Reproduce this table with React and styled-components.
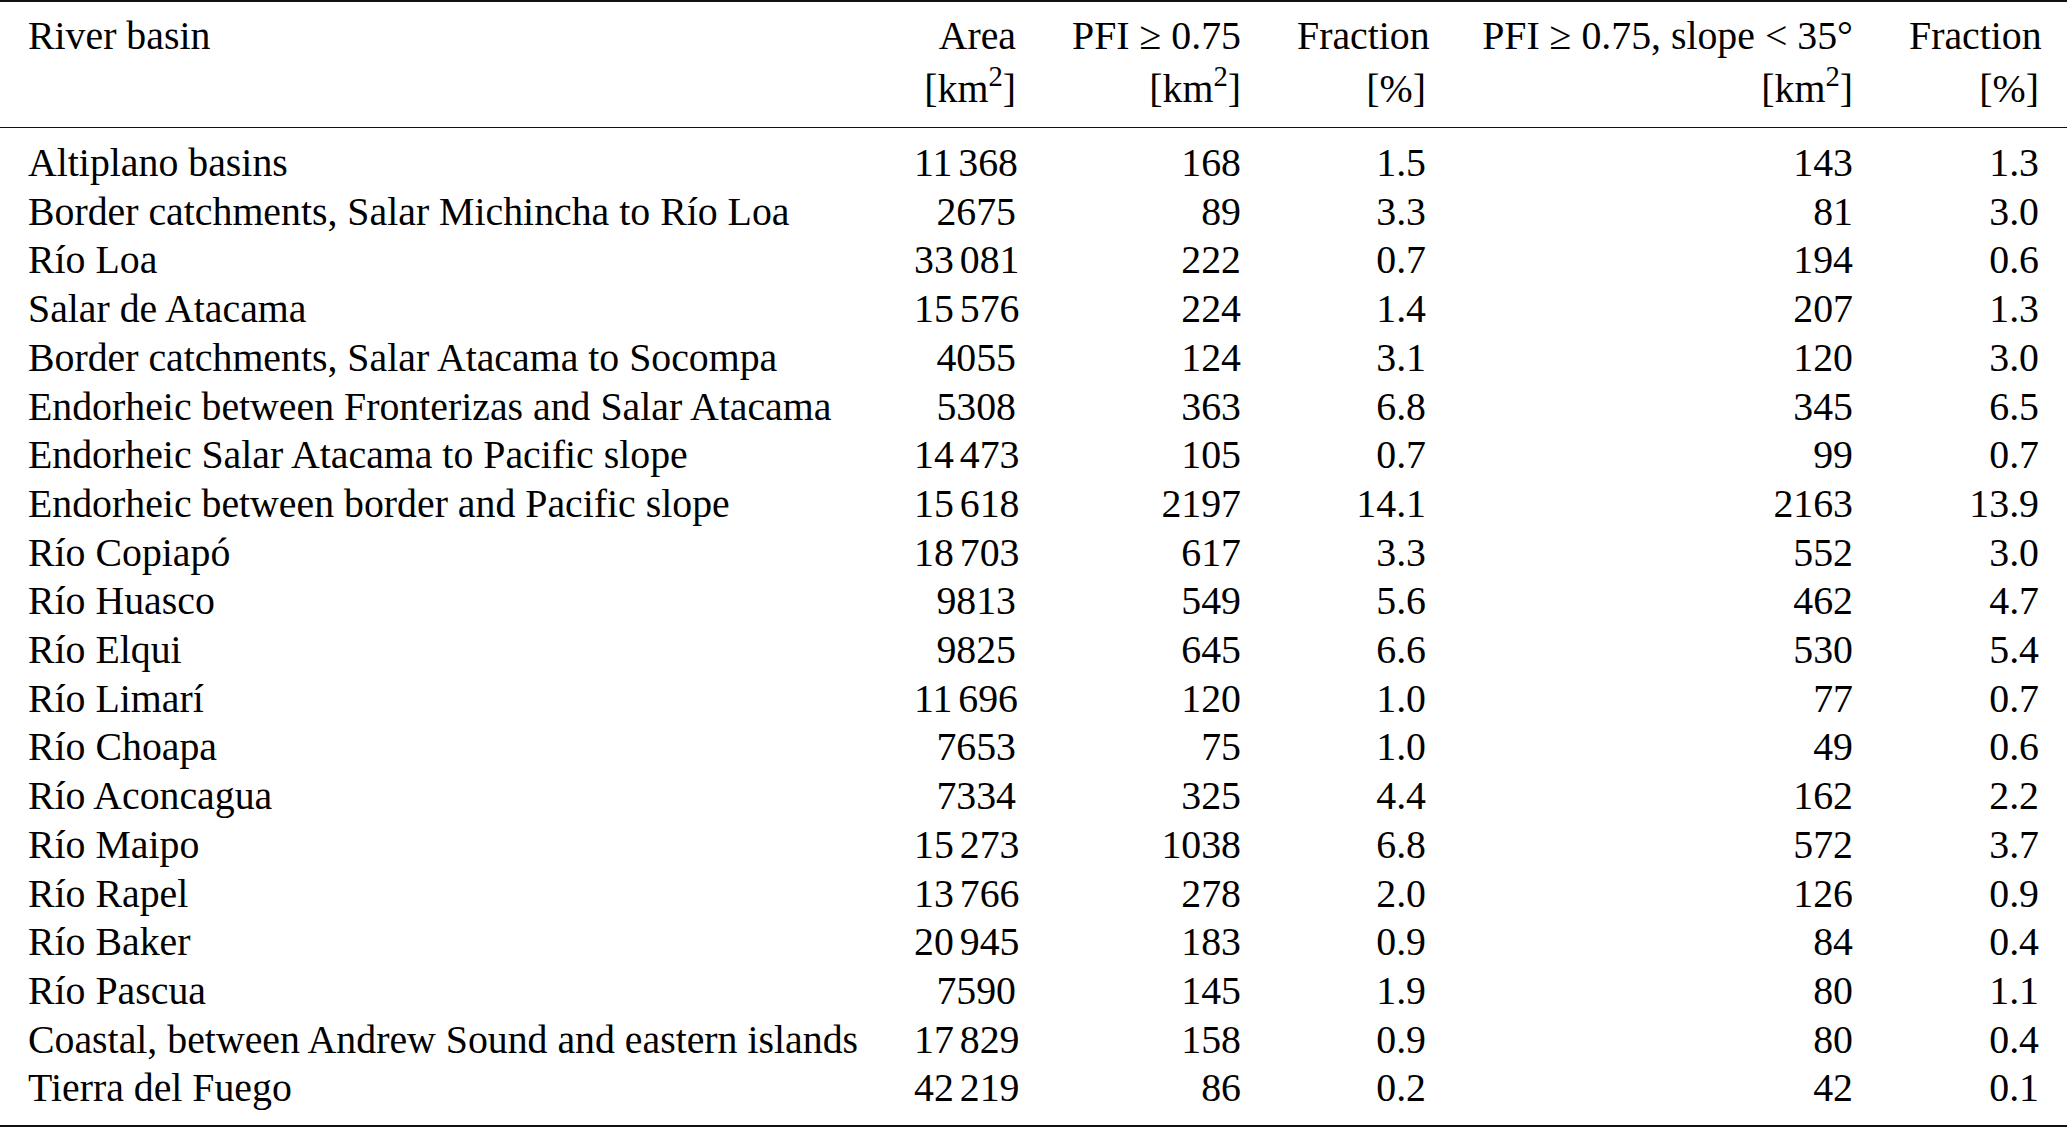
import React from 'react';
import styled, { createGlobalStyle } from 'styled-components';

const GlobalStyle = createGlobalStyle`
  html, body {
    margin: 0;
    padding: 0;
    background: #ffffff;
  }
  body {
    font-family: "Liberation Serif", "Times New Roman", serif;
    color: #000;
  }
`;

const Page = styled.div`
  width: 2067px;
  height: 1130px;
  background: #fff;
  overflow: hidden;
`;

const Table = styled.table`
  width: 2067px;
  table-layout: fixed;
  border-collapse: collapse;
  font-size: 39.8px;
  border-top: 2.5px solid #111;
  border-bottom: 2.5px solid #111;
`;

const Head = styled.thead`
  border-bottom: 1.5px solid #111;
`;

const HeadCell = styled.th`
  font-weight: normal;
  line-height: 52.5px;
  padding: 8px 28px 12px;
  vertical-align: top;
  text-align: ${p => (p.$left ? 'left' : 'right')};
  white-space: nowrap;
`;

const Row = styled.tr`
  &:first-child td {
    padding-top: 11px;
  }
  &:last-child td {
    padding-bottom: 12px;
  }
`;

const Cell = styled.td`
  line-height: 48.7px;
  padding: 0 28px;
  text-align: ${p => (p.$left ? 'left' : 'right')};
  white-space: nowrap;
`;

const Sup = styled.sup`
  font-size: 0.72em;
  line-height: 0;
  vertical-align: 0.55em;
`;

const Thin = styled.span`
  display: inline-block;
  width: 0.15em;
`;

const widths = [886, 158, 225, 185, 427, 186];

const rows = [
  ['Altiplano basins', '11 368', '168', '1.5', '143', '1.3'],
  ['Border catchments, Salar Michincha to Río Loa', '2675', '89', '3.3', '81', '3.0'],
  ['Río Loa', '33 081', '222', '0.7', '194', '0.6'],
  ['Salar de Atacama', '15 576', '224', '1.4', '207', '1.3'],
  ['Border catchments, Salar Atacama to Socompa', '4055', '124', '3.1', '120', '3.0'],
  ['Endorheic between Fronterizas and Salar Atacama', '5308', '363', '6.8', '345', '6.5'],
  ['Endorheic Salar Atacama to Pacific slope', '14 473', '105', '0.7', '99', '0.7'],
  ['Endorheic between border and Pacific slope', '15 618', '2197', '14.1', '2163', '13.9'],
  ['Río Copiapó', '18 703', '617', '3.3', '552', '3.0'],
  ['Río Huasco', '9813', '549', '5.6', '462', '4.7'],
  ['Río Elqui', '9825', '645', '6.6', '530', '5.4'],
  ['Río Limarí', '11 696', '120', '1.0', '77', '0.7'],
  ['Río Choapa', '7653', '75', '1.0', '49', '0.6'],
  ['Río Aconcagua', '7334', '325', '4.4', '162', '2.2'],
  ['Río Maipo', '15 273', '1038', '6.8', '572', '3.7'],
  ['Río Rapel', '13 766', '278', '2.0', '126', '0.9'],
  ['Río Baker', '20 945', '183', '0.9', '84', '0.4'],
  ['Río Pascua', '7590', '145', '1.9', '80', '1.1'],
  ['Coastal, between Andrew Sound and eastern islands', '17 829', '158', '0.9', '80', '0.4'],
  ['Tierra del Fuego', '42 219', '86', '0.2', '42', '0.1'],
];

// numbers like "11 368" get a LaTeX-style thin space
const Num = ({ value }) => {
  const parts = value.split(' ');
  return parts.map((p, i) => (
    <React.Fragment key={i}>
      {i > 0 && <Thin />}
      {p}
    </React.Fragment>
  ));
};

const Km2 = () => (
  <>
    [km<Sup>2</Sup>]
  </>
);

export default function App() {
  return (
    <Page>
      <GlobalStyle />
      <Table>
        <colgroup>
          {widths.map((w, i) => (
            <col key={i} style={{ width: w }} />
          ))}
        </colgroup>
        <Head>
          <tr>
            <HeadCell $left>River basin<br />&nbsp;</HeadCell>
            <HeadCell>Area<br /><Km2 /></HeadCell>
            <HeadCell>PFI ≥ 0.75<br /><Km2 /></HeadCell>
            <HeadCell>Fraction<br />[%]</HeadCell>
            <HeadCell>PFI ≥ 0.75, slope &lt; 35°<br /><Km2 /></HeadCell>
            <HeadCell>Fraction<br />[%]</HeadCell>
          </tr>
        </Head>
        <tbody>
          {rows.map(r => (
            <Row key={r[0]}>
              <Cell $left>{r[0]}</Cell>
              {r.slice(1).map((v, i) => (
                <Cell key={i}><Num value={v} /></Cell>
              ))}
            </Row>
          ))}
        </tbody>
      </Table>
    </Page>
  );
}
